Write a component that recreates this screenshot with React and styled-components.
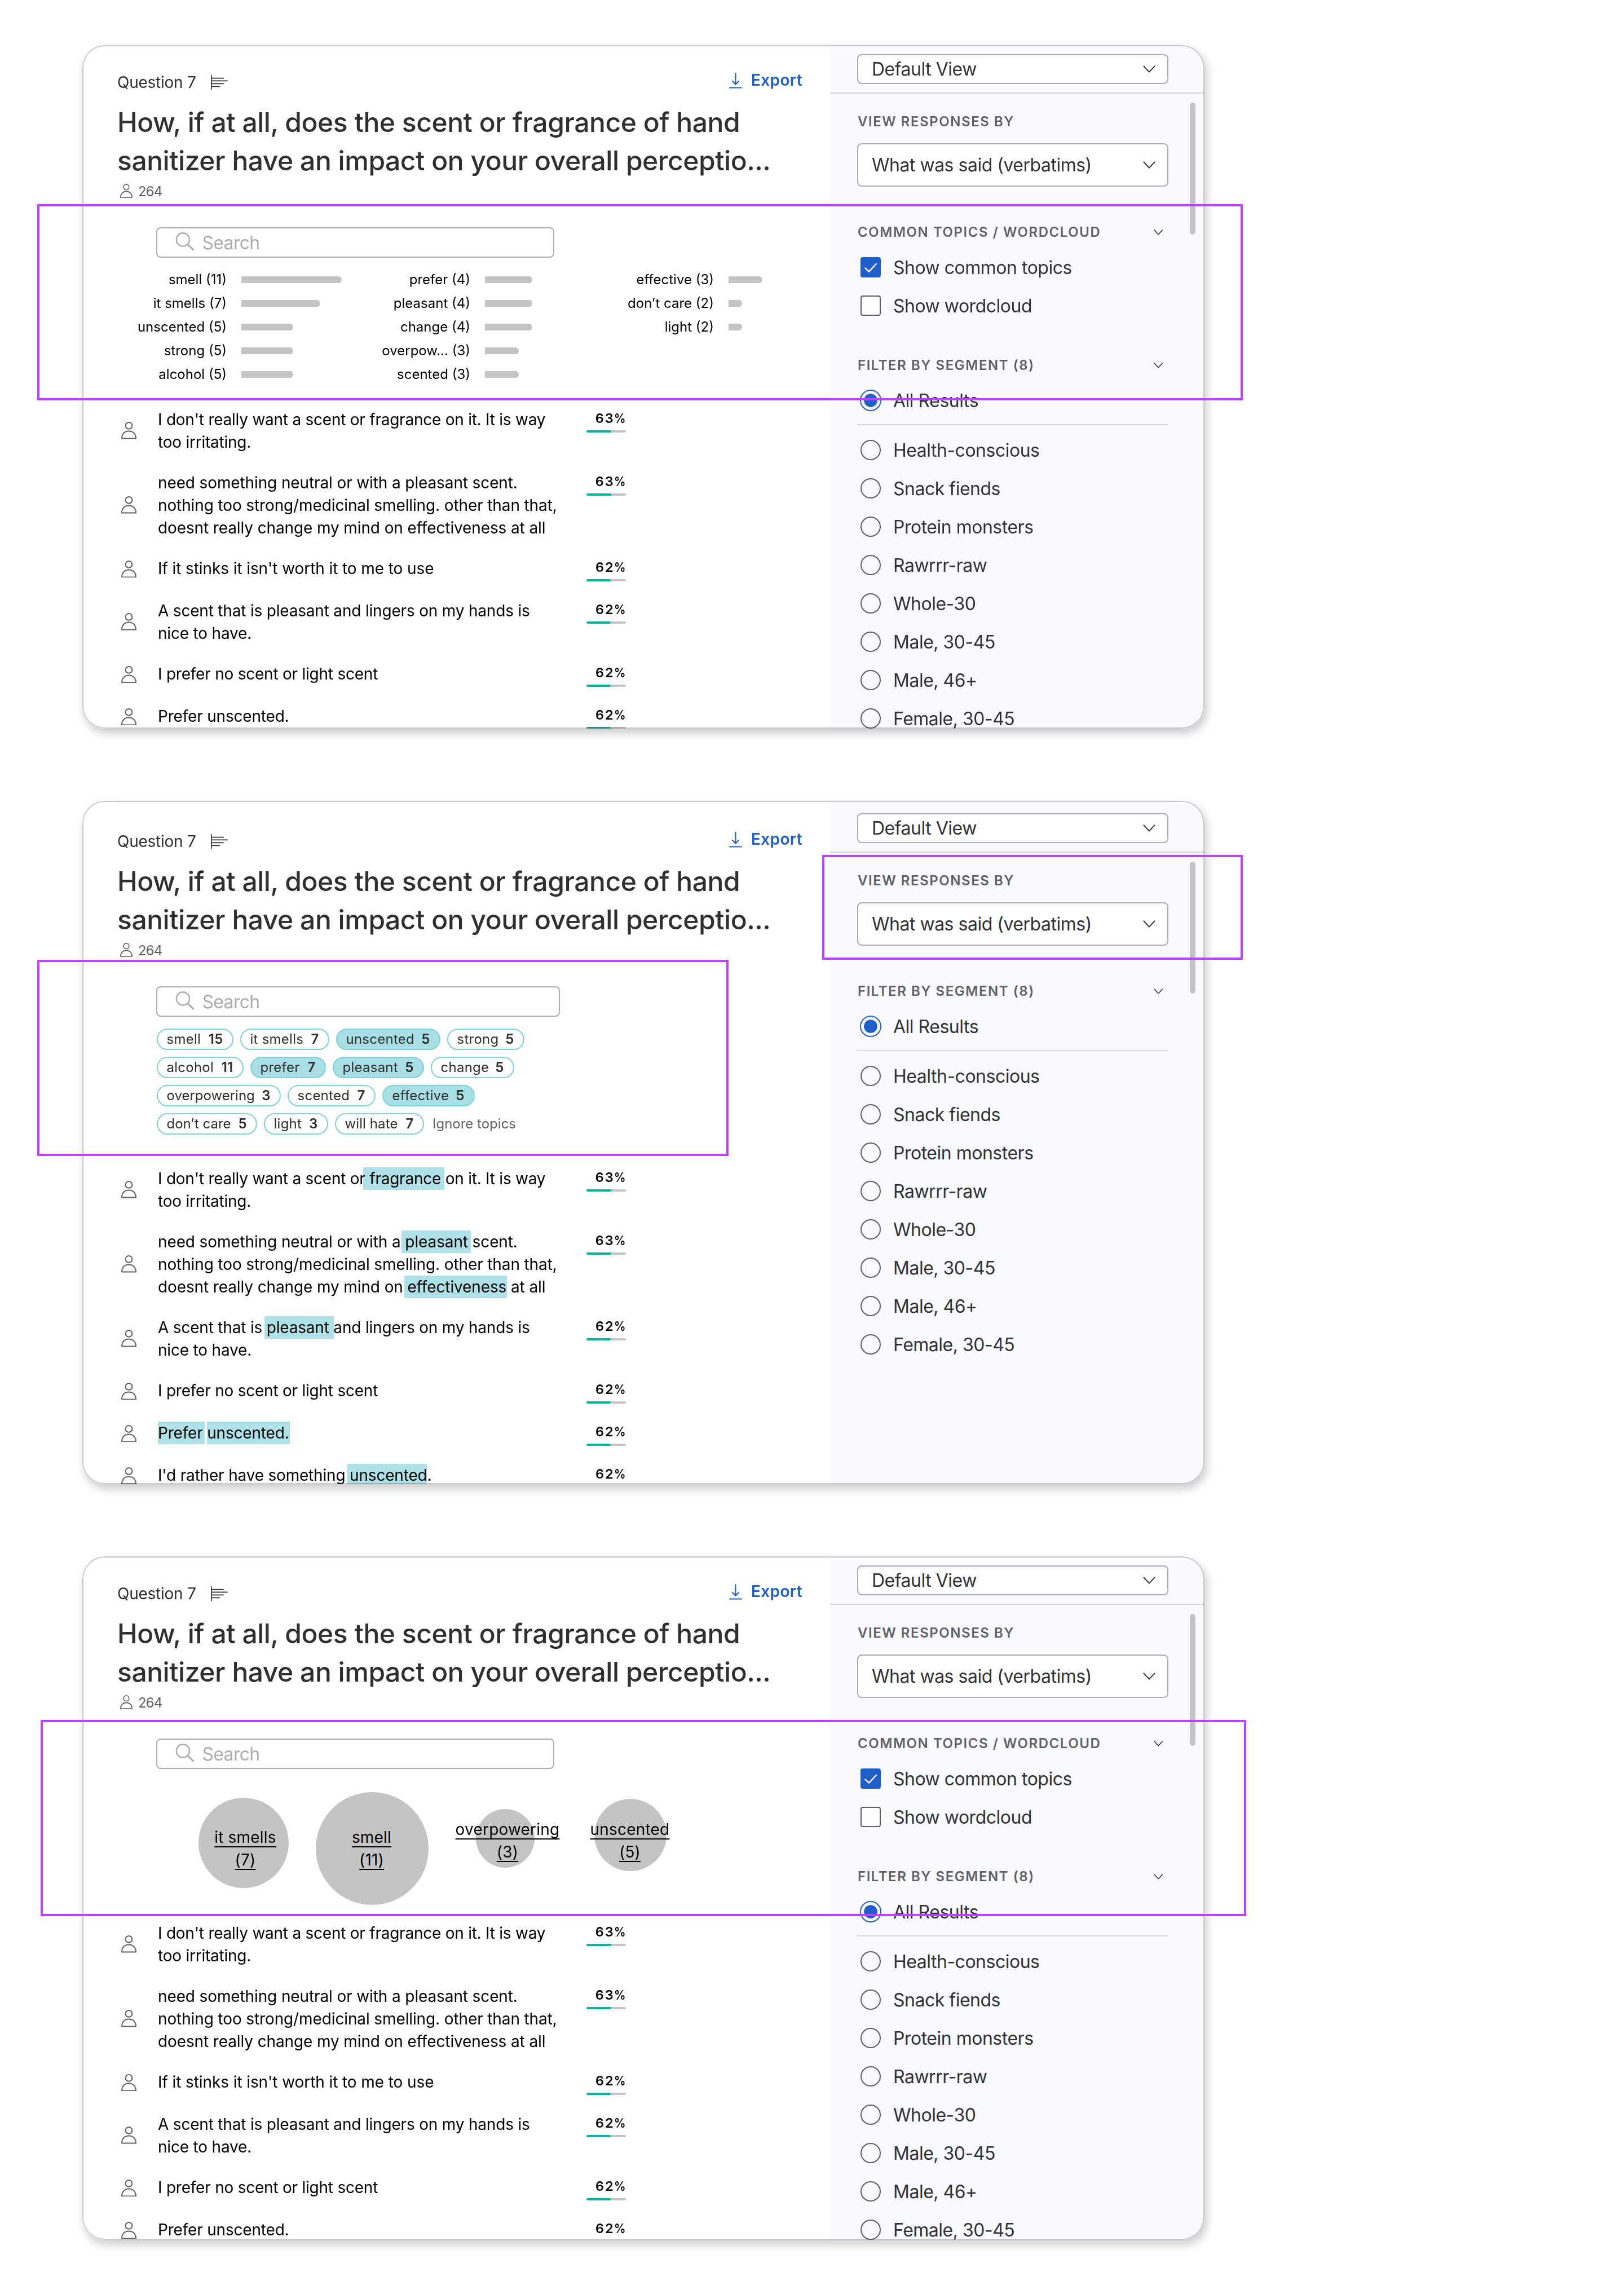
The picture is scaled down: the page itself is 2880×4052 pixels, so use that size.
import React from 'react';
import styled, { createGlobalStyle } from 'styled-components';

const GlobalStyle = createGlobalStyle`
  *, *::before, *::after { box-sizing: border-box; }
  body { margin: 0; background: #fff; font-family: Inter, "Liberation Sans", sans-serif; color: #2e2f31; }
`;

const Page = styled.main`
  position: relative;
  display: flex;
  flex-direction: column;
  gap: 128px;
  width: 2880px;
  height: 4052px;
  padding: 80px 0 0 146px;
  overflow: hidden;
`;

const Card = styled.section`
  position: relative;
  flex: none;
  width: 1990px;
  height: 1212px;
  border-radius: 40px;
  overflow: hidden;
  background: #fff;
  &::after {
    content: '';
    position: absolute;
    inset: 0;
    border: 2px solid rgba(40, 28, 36, 0.24);
    border-radius: 40px;
    pointer-events: none;
  }
`;

const CardShell = styled.div`
  flex: none;
  width: 1990px;
  border-radius: 40px;
  box-shadow: 4px 8px 16px rgba(0, 8, 12, 0.21);
`;

const Body = styled.div`
  display: flex;
  margin-top: ${(p) => p.$shift}px;
  height: 1212px;
`;

const Main = styled.div`
  width: 1326px;
`;

/* ---------- question header ---------- */

const Header = styled.header`
  height: 323px;
  padding: 46px 49px 0 62px;
`;

const HeaderBar = styled.div`
  display: flex;
  justify-content: space-between;
  align-items: flex-start;
  height: 40px;
`;

const QuestionLabel = styled.div`
  display: flex;
  gap: 26px;
  font-size: 28px;
  line-height: 40px;
  letter-spacing: -0.25px;
  svg { margin-top: 7px; }
`;

const ExportButton = styled.div`
  display: flex;
  gap: 16px;
  margin-top: -4.5px;
  font-size: 28px;
  font-weight: 600;
  line-height: 40px;
  letter-spacing: 0.34px;
  color: #1f5fcb;
  svg { margin-top: 7px; }
`;

const Title = styled.h1`
  margin: 16.5px 0 0;
  font-size: 48px;
  font-weight: 500;
  line-height: 68px;
  letter-spacing: -0.47px;
  white-space: nowrap;
`;

const Count = styled.div`
  display: flex;
  margin: 4.8px 0 0 5px;
  gap: 10px;
  font-size: 24px;
  line-height: 33px;
  letter-spacing: -0.85px;
  color: #5f5f63;
  svg { margin-top: 3px; }
`;

const SearchBox = styled.div`
  display: flex;
  width: ${(p) => p.$width}px;
  height: 54px;
  margin-left: 131px;
  padding: 0 0 0 31px;
  border: 2px solid #afabac;
  border-radius: 8px;
  font-size: 32px;
  line-height: 51px;
  letter-spacing: -0.69px;
  color: #b0abac;
  svg { margin: 6px 13.5px 0 0; }
`;

/* ---------- topic bars ---------- */

const TopicArea = styled.div`
  position: relative;
  height: ${(p) => p.$height}px;
`;

const BarColumns = styled.div`
  display: flex;
  padding: 18px 0 0 66px;
`;

const BarColumn = styled.div`
  width: 432px;
  flex: none;
`;

const BarRow = styled.div`
  display: flex;
  align-items: center;
  gap: 26px;
  height: 42.1px;
`;

const BarLabel = styled.span`
  width: 190px;
  text-align: right;
  font-size: 24px;
  line-height: 42px;
  color: #000;
`;

const Bar = styled.span`
  width: ${(p) => p.$width}px;
  height: 12px;
  border-radius: 0 6px 6px 0;
  background: #c4c4c4;
`;

/* ---------- topic chips ---------- */

const Chips = styled.div`
  display: flex;
  flex-wrap: wrap;
  gap: 12px;
  width: 720px;
  margin-left: 132px;
  padding-top: 21px;
`;

const Chip = styled.span`
  display: flex;
  justify-content: space-between;
  width: ${(p) => p.$width}px;
  height: 38px;
  padding: 0 16.5px 0 15.5px;
  border: 2px solid #7dd1da;
  border-radius: 19px;
  background: ${(p) => (p.$active ? '#a7dfe5' : '#fff')};
  font-size: 24px;
  line-height: 34px;
  letter-spacing: ${(p) => p.$track}px;
  b { font-weight: 600; }
`;

const IgnoreLink = styled.span`
  margin-left: 3px;
  font-size: 24px;
  line-height: 38px;
  color: #626264;
`;

/* ---------- topic bubbles ---------- */

const Bubble = styled.div`
  position: absolute;
  left: ${(p) => p.$x}px;
  top: ${(p) => p.$y}px;
  display: flex;
  justify-content: center;
  width: ${(p) => p.$size}px;
  height: ${(p) => p.$size}px;
  padding-top: ${(p) => p.$pad}px;
  border-radius: 50%;
  background: #c4c4c4;
`;

const BubbleText = styled.span`
  flex: none;
  margin-left: ${(p) => p.$nudge * 2}px;
  text-align: center;
  white-space: pre;
  font-size: 28px;
  line-height: 40px;
  letter-spacing: 0.2px;
  color: #000;
  text-decoration: underline;
  text-decoration-thickness: 2px;
  text-underline-offset: 6px;
  text-decoration-skip-ink: none;
`;

/* ---------- responses ---------- */

const Responses = styled.div`
  display: flex;
  flex-direction: column;
  gap: 32px;
  padding-left: 68.5px;
`;

const Response = styled.div`
  display: flex;
  align-items: center;
`;

const ResponseText = styled.p`
  align-self: flex-start;
  width: 714px;
  margin: 0 0 0 38.5px;
  font-size: 28px;
  line-height: 40px;
  letter-spacing: ${(p) => p.$track}px;
  color: #000;
`;

const Mark = styled.mark`
  padding: 3px ${(p) => p.$r}px 3px ${(p) => p.$l}px;
  margin: 0 ${(p) => -p.$r}px 0 ${(p) => -p.$l}px;
  background: #aee1e7;
  color: inherit;
  mix-blend-mode: multiply;
`;

const Score = styled.div`
  align-self: flex-start;
  width: 70px;
  height: 43px;
  margin-left: 46px;
`;

const ScoreValue = styled.div`
  height: 39px;
  text-align: right;
  font-size: 23.5px;
  font-weight: 600;
  line-height: 35px;
  letter-spacing: 1.8px;
  color: #000;
  white-space: nowrap;
`;

const PercentSign = styled.span`
  display: inline-block;
  margin-left: -3px;
  letter-spacing: 0;
  transform: scaleX(0.87);
  transform-origin: right center;
`;

const Track = styled.div`
  height: 4px;
  border-radius: 2px;
  overflow: hidden;
  background: #c4c4c4;
  &::before {
    content: '';
    display: block;
    width: ${(p) => p.$value}%;
    height: 4px;
    border-radius: 2px;
    background: #05b49f;
  }
`;

/* ---------- sidebar ---------- */

const Sidebar = styled.aside`
  position: relative;
  width: 664px;
  background: #f8fafe;
  color: #303134;
`;

const SidebarTop = styled.div`
  height: 86px;
  padding: 15.5px 64px 0 48px;
  border-bottom: 2px solid #d5d7da;
`;

const Panel = styled.div`
  padding: 34.4px 64px 0 48px;
`;

const Select = styled.div`
  display: flex;
  justify-content: space-between;
  align-items: center;
  height: ${(p) => p.$height}px;
  padding: 0 21px 0 24px;
  border: 2px solid #afabb0;
  border-radius: 8px;
  background: #fff;
  font-size: 32px;
  letter-spacing: -0.49px;
`;

const Heading = styled.h2`
  display: flex;
  justify-content: space-between;
  align-items: center;
  height: 32px;
  margin: ${(p) => p.$top || 0}px 0 ${(p) => p.$bottom}px;
  padding: 0 10px 0 1px;
  font-size: 24px;
  font-weight: 600;
  line-height: 32px;
  letter-spacing: 1.54px;
  color: #606164;
`;

const Option = styled.label`
  display: flex;
  align-items: center;
  gap: ${(p) => p.$gap || 22}px;
  height: 68px;
  padding-left: ${(p) => p.$inset || 6}px;
`;

const OptionText = styled.span`
  padding-top: 2px;
  font-size: 32px;
  line-height: 40px;
  letter-spacing: -0.49px;
`;

const Checkbox = styled.span`
  display: flex;
  width: 36px;
  height: 36px;
  border: 2px solid ${(p) => (p.$on ? '#1f5fcb' : '#5f5f63')};
  border-radius: 4px;
  background: ${(p) => (p.$on ? '#1f5fcb' : '#fff')};
`;

const Radio = styled.span`
  width: 36px;
  height: 36px;
  border: 2px solid #5f5f63;
  border-radius: 50%;
`;

const RadioOn = styled.span`
  width: 38px;
  height: 38px;
  padding: 5px;
  border: 2px solid #1f5fcb;
  border-radius: 50%;
  background: #1f5fcb content-box;
  box-shadow: inset 0 0 0 5px #fff;
`;

const Rule = styled.div`
  height: 2px;
  margin: 8px 0 10px;
  background: #d6d8da;
`;

const ScrollThumb = styled.div`
  position: absolute;
  top: 102px;
  right: 16px;
  width: 10px;
  height: 234px;
  border-radius: 5px;
  background: #c2c2c7;
`;

/* Highlight frames drawn over the mock-ups */
const Frame = styled.div`
  position: absolute;
  left: ${(p) => p.$x}px;
  top: ${(p) => p.$y}px;
  width: ${(p) => p.$w}px;
  height: ${(p) => p.$h}px;
  border: 4px solid #bd42ff;
`;

const PersonIcon = ({ width, height }) => (
  <svg width={width} height={height} viewBox="0 0 27 30.5" fill="none" stroke="#5f5f63" strokeWidth="2" strokeLinejoin="round">
    <circle cx="13.5" cy="6.9" r="5.9" />
    <path d="M1 29.4 C1 21.5 5.8 16.4 13.5 16.4 C21.2 16.4 26 21.5 26 29.4 Z" />
  </svg>
);

const ChartIcon = () => (
  <svg width="30" height="26" viewBox="0 0 30 26" fill="none" stroke="#2e2f31" strokeLinecap="round">
    <path d="M1 0.5 V25.5" strokeWidth="1.6" />
    <path d="M1 5.6 H22.2 M1 10.3 H29 M1 15.3 H22.2 M1 20.3 H15.4" strokeWidth="1.8" />
  </svg>
);

const DownloadIcon = () => (
  <svg width="23" height="28" viewBox="0 0 23 28" fill="none" stroke="#1f5fcb" strokeWidth="2" strokeLinecap="round" strokeLinejoin="round">
    <path d="M11.5 1 V20.5 M6 15 L11.5 20.8 L17 15 M1 26.4 H22" />
  </svg>
);

const SearchIcon = () => (
  <svg width="35" height="34" viewBox="0 0 35 34" fill="none" stroke="#b0abac" strokeLinecap="round">
    <circle cx="14.4" cy="13.9" r="11.6" strokeWidth="2.4" />
    <path d="M23 22.5 L32.6 31.8" strokeWidth="3.2" />
  </svg>
);

const Chevron = ({ size = 22, stroke = 2 }) => (
  <svg width={size} height={size * 0.6} viewBox="0 0 22 13.2" fill="none" stroke="#303134" strokeWidth={(stroke * 22) / size} strokeLinecap="round" strokeLinejoin="round">
    <path d="M1.4 1.4 L11 11.6 L20.6 1.4" />
  </svg>
);

const CheckIcon = () => (
  <svg width="32" height="32" viewBox="0 0 32 32" fill="none" stroke="#fff" strokeWidth="2.4" strokeLinecap="round" strokeLinejoin="round">
    <path d="M6.4 17.4 L13 23.6 L26 9.8" />
  </svg>
);

const TOPIC_COLUMNS = [
  [['smell (11)', 178], ['it smells (7)', 140], ['unscented (5)', 92], ['strong (5)', 92], ['alcohol (5)', 92]],
  [['prefer (4)', 84], ['pleasant (4)', 84], ['change (4)', 84], ['overpow... (3)', 60], ['scented (3)', 60]],
  [['effective (3)', 60], ['don’t care (2)', 24], ['light (2)', 24]],
];

const CHIPS = [
  { label: 'smell', count: 15, width: 136 },
  { label: 'it smells', count: 7, width: 158 },
  { label: 'unscented', count: 5, width: 185, active: true },
  { label: 'strong', count: 5, width: 137 },
  { label: 'alcohol', count: 11, width: 154 },
  { label: 'prefer', count: 7, width: 134, active: true },
  { label: 'pleasant', count: 5, width: 162, active: true },
  { label: 'change', count: 5, width: 148 },
  { label: 'overpowering', count: 3, width: 220, track: 0 },
  { label: 'scented', count: 7, width: 156 },
  { label: 'effective', count: 5, width: 164, active: true },
  { label: 'don’t care', count: 5, width: 178, track: 0 },
  { label: 'light', count: 3, width: 114 },
  { label: 'will hate', count: 7, width: 158, track: 0.1 },
];

const BUBBLES = [
  { label: 'it smells', count: 7, x: 206, y: 51, size: 160, pad: 50, nudge: 3 },
  { label: 'smell', count: 11, x: 414, y: 41, size: 200, pad: 60, nudge: -1 },
  { label: 'overpowering', count: 3, x: 698, y: 71, size: 104, pad: 16, nudge: 4 },
  { label: 'unscented', count: 5, x: 908, y: 53, size: 128, pad: 34, nudge: -1 },
];

const PLAIN_RESPONSES = [
  [63, "I don't really want a scent or fragrance on it. It is way too irritating.", -0.24],
  [63, 'need something neutral or with a pleasant scent. nothing too strong/medicinal smelling. other than that, doesnt really change my mind on effectiveness at all', -0.12],
  [62, "If it stinks it isn't worth it to me to use", -0.09],
  [62, 'A scent that is pleasant and lingers on my hands is nice to have.', -0.19],
  [62, 'I prefer no scent or light scent', -0.23],
  [62, 'Prefer unscented.', -0.19],
];

const MARKED_RESPONSES = [
  [63, <>I don't really want a scent or <Mark $l={11} $r={6}>fragrance</Mark> on it. It is way too irritating.</>, -0.24],
  [63, <>need something neutral or with a <Mark $l={6} $r={5}>pleasant</Mark> scent. nothing too strong/medicinal smelling. other than that, doesnt really change my mind on <Mark $l={5} $r={1}>effectiveness</Mark> at all</>, -0.12],
  [62, <>A scent that is <Mark $l={4} $r={8}>pleasant</Mark> and lingers on my hands is nice to have.</>, -0.19],
  [62, 'I prefer no scent or light scent', -0.23],
  [62, <><Mark $l={0} $r={3}>Prefer</Mark> <Mark $l={0} $r={1}>unscented.</Mark></>, -0.19],
  [62, <>I'd rather have something <Mark $l={4} $r={0}>unscented</Mark>.</>, -0.19],
];

const SEGMENTS = ['Health-conscious', 'Snack fiends', 'Protein monsters', 'Rawrrr-raw', 'Whole-30', 'Male, 30-45', 'Male, 46+', 'Female, 30-45'];

const TopicBars = () => (
  <BarColumns>
    {TOPIC_COLUMNS.map((rows, i) => (
      <BarColumn key={i}>
        {rows.map(([label, width]) => (
          <BarRow key={label}>
            <BarLabel>{label}</BarLabel>
            <Bar $width={width} />
          </BarRow>
        ))}
      </BarColumn>
    ))}
  </BarColumns>
);

const TopicChips = () => (
  <Chips>
    {CHIPS.map(({ label, count, width, active, track = 0.25 }) => (
      <Chip key={label} $active={active} $width={width} $track={track}>
        {label}
        <b>{count}</b>
      </Chip>
    ))}
    <IgnoreLink>Ignore topics</IgnoreLink>
  </Chips>
);

const TopicBubbles = () =>
  BUBBLES.map((b) => (
    <Bubble key={b.label} $x={b.x} $y={b.y} $size={b.size} $pad={b.pad}>
      <BubbleText $nudge={b.nudge}>{`${b.label}\n(${b.count})`}</BubbleText>
    </Bubble>
  ));

const Screen = ({ shift = 0, searchWidth = 706, areaHeight = 266.6, topics, responses, showTopicOptions }) => (
  <CardShell>
    <Card>
      <Body $shift={shift}>
        <Main>
          <Header>
            <HeaderBar>
              <QuestionLabel>Question 7<ChartIcon /></QuestionLabel>
              <ExportButton><DownloadIcon />Export</ExportButton>
            </HeaderBar>
            <Title>
              How, if at all, does the scent or fragrance of hand<br />
              sanitizer have an impact on your overall perceptio...
            </Title>
            <Count><PersonIcon width={22} height={25} />264</Count>
          </Header>
          <SearchBox $width={searchWidth}><SearchIcon />Search</SearchBox>
          <TopicArea $height={areaHeight}>{topics}</TopicArea>
          <Responses>
            {responses.map(([value, text, track], i) => (
              <Response key={i}>
                <PersonIcon width={27} height={30.5} />
                <ResponseText $track={track}>{text}</ResponseText>
                <Score>
                  <ScoreValue>{value}<PercentSign>%</PercentSign></ScoreValue>
                  <Track $value={value} />
                </Score>
              </Response>
            ))}
          </Responses>
        </Main>
        <Sidebar>
          <SidebarTop>
            <Select $height={53.5}>Default View<Chevron /></Select>
          </SidebarTop>
          <Panel>
            <Heading $bottom={21.6}>VIEW RESPONSES BY</Heading>
            <Select $height={77}>What was said (verbatims)<Chevron /></Select>
            {showTopicOptions && (
              <>
                <Heading $top={65.4} $bottom={11.6}>COMMON TOPICS / WORDCLOUD<Chevron size={16.5} stroke={1.6} /></Heading>
                <Option><Checkbox $on><CheckIcon /></Checkbox><OptionText>Show common topics</OptionText></Option>
                <Option><Checkbox /><OptionText>Show wordcloud</OptionText></Option>
              </>
            )}
            <Heading $top={showTopicOptions ? 56.4 : 65.4} $bottom={11.6}>FILTER BY SEGMENT (8)<Chevron size={16.5} stroke={1.6} /></Heading>
            <Option $inset={5} $gap={21}><RadioOn /><OptionText>All Results</OptionText></Option>
            <Rule />
            {SEGMENTS.map((s) => (
              <Option key={s}><Radio /><OptionText>{s}</OptionText></Option>
            ))}
          </Panel>
          <ScrollThumb />
        </Sidebar>
      </Body>
    </Card>
  </CardShell>
);

export default function App() {
  return (
    <>
      <GlobalStyle />
      <Page>
        <Screen topics={<TopicBars />} responses={PLAIN_RESPONSES} showTopicOptions />
        <Screen shift={6} searchWidth={716} topics={<TopicChips />} responses={MARKED_RESPONSES} />
        <Screen areaHeight={270.6} topics={<TopicBubbles />} responses={PLAIN_RESPONSES} showTopicOptions />
        <Frame $x={66} $y={362} $w={2138} $h={348} />
        <Frame $x={1458} $y={1516} $w={746} $h={186} />
        <Frame $x={66} $y={1702} $w={1226} $h={348} />
        <Frame $x={72} $y={3050} $w={2138} $h={348} />
      </Page>
    </>
  );
}
